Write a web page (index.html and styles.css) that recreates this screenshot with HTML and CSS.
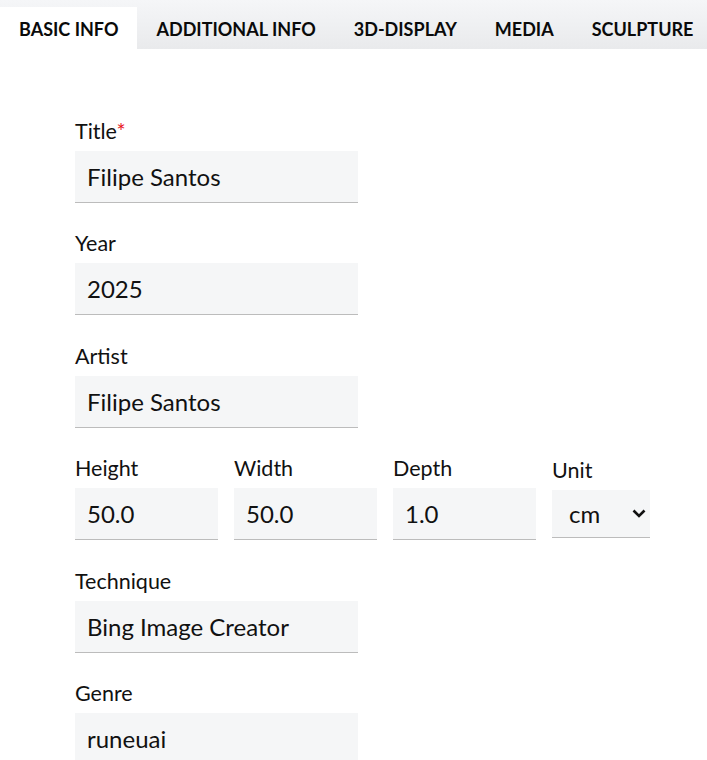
FILE: index.html
```html
<!DOCTYPE html>
<html lang="en">
<head>
<meta charset="utf-8">
<title>Basic info</title>
<link rel="stylesheet" href="styles.css">
</head>
<body>
<nav class="tabs">
  <div class="tab active">BASIC INFO</div>
  <div class="tab">ADDITIONAL INFO</div>
  <div class="tab">3D-DISPLAY</div>
  <div class="tab">MEDIA</div>
  <div class="tab">SCULPTURE</div>
</nav>
<form class="form">
  <div class="group">
    <label class="label">Title<span class="req">*</span></label>
    <div class="input wide">Filipe Santos</div>
  </div>
  <div class="group">
    <label class="label">Year</label>
    <div class="input wide">2025</div>
  </div>
  <div class="group">
    <label class="label">Artist</label>
    <div class="input wide">Filipe Santos</div>
  </div>
  <div class="group row">
    <div class="col">
      <label class="label">Height</label>
      <div class="input small">50.0</div>
    </div>
    <div class="col">
      <label class="label">Width</label>
      <div class="input small">50.0</div>
    </div>
    <div class="col">
      <label class="label">Depth</label>
      <div class="input small">1.0</div>
    </div>
    <div class="col unit">
      <label class="label">Unit</label>
      <div class="select">cm
        <svg class="chev" width="14" height="9" viewBox="0 0 14 9"><path d="M1.5 1.5 L7 7 L12.5 1.5" fill="none" stroke="#111" stroke-width="2.6"/></svg>
      </div>
    </div>
  </div>
  <div class="group">
    <label class="label">Technique</label>
    <div class="input wide">Bing Image Creator</div>
  </div>
  <div class="group">
    <label class="label">Genre</label>
    <div class="input wide">runeuai</div>
  </div>
</form>
</body>
</html>
```
FILE: styles.css
```css
html, body {
  margin: 0;
  padding: 0;
  background: #fff;
  font-family: Lato, "Noto Sans", sans-serif;
  color: #111;
  overflow: hidden;
  height: 760px;
}
.tabs {
  display: flex;
  align-items: flex-end;
  height: 49px;
  background: linear-gradient(#f5f6f8, #e9eaec);
}
.tab {
  height: 42px;
  box-sizing: border-box;
  padding: 10px 19px 0 19px;
  font-size: 18px;
  font-weight: 700;
  line-height: 24px;
  color: #0a0a0a;
  white-space: nowrap;
}
.tab.active {
  background: #fff;
}
.form {
  padding: 69px 0 0 75px;
}
.group {
  margin-bottom: 27.4px;
}
.label {
  display: block;
  font-size: 21.5px;
  line-height: 26px;
  margin-bottom: 7px;
}
.req {
  color: #e8141b;
}
.input {
  box-sizing: border-box;
  height: 52px;
  background: #f5f6f7;
  border-bottom: 1px solid #bcbcbc;
  font-size: 24px;
  line-height: 51px;
  padding: 0 12px;
}
.wide {
  width: 283px;
}
.row {
  display: flex;
  gap: 16px;
  align-items: flex-start;
}
.small {
  width: 143px;
}
.unit .label {
  margin-top: 2px;
}
.select {
  box-sizing: border-box;
  width: 98px;
  height: 48px;
  background: #f5f6f7;
  border-bottom: 1px solid #bcbcbc;
  font-size: 24px;
  line-height: 47px;
  padding: 0 0 0 17px;
  display: flex;
  align-items: center;
  justify-content: space-between;
}
.chev {
  margin-right: 4px;
}
```
